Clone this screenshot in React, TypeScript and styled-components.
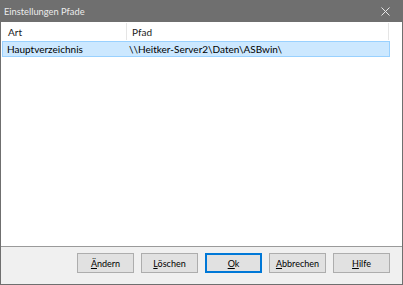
import React from 'react'
import styled, { createGlobalStyle } from 'styled-components'

const GlobalStyle = createGlobalStyle`
  html, body {
    margin: 0;
    padding: 0;
    background: #ffffff;
  }
  body {
    font-family: Lato, 'Noto Sans', sans-serif;
    font-size: 10px;
  }
`

const Window = styled.div`
  display: flex;
  flex-direction: column;
  width: 403px;
  height: 285px;
  box-sizing: border-box;
  border: 1px solid #6f6f6f;
  border-top: none;
  background: #ffffff;
`

const TitleBar = styled.div`
  display: flex;
  align-items: center;
  justify-content: space-between;
  height: 22px;
  padding: 0 13px 0 4px;
  margin: 0 -1px;
  background: #6f6f6f;
  color: #ececec;
  font-size: 9.3px;
`

const CloseIcon = styled.svg`
  width: 9px;
  height: 9px;
`

const ListView = styled.div`
  flex: 1;
  display: flex;
  flex-direction: column;
  padding: 0 12px 0 1px;
  border-bottom: 1px solid #9a9a9a;
`

const Row = styled.div<{ selected?: boolean }>`
  display: grid;
  grid-template-columns: 124px 1fr;
  box-sizing: border-box;
  height: ${({ selected }) => (selected ? '16px' : '19px')};
  align-items: center;
  background: ${({ selected }) => (selected ? '#cce8ff' : 'transparent')};
  border: 1px solid ${({ selected }) => (selected ? '#99d1ff' : 'transparent')};
  color: #000000;
`

const HeaderCell = styled.div<{ first?: boolean }>`
  height: 100%;
  display: flex;
  align-items: center;
  padding-left: ${({ first }) => (first ? '5px' : '5px')};
  color: #1a1a1a;
  border-right: 1px solid #e5e5e5;
`

const Cell = styled.div<{ first?: boolean }>`
  padding-left: ${({ first }) => (first ? '4px' : '2px')};
  white-space: nowrap;
`

const Footer = styled.div`
  display: flex;
  justify-content: flex-end;
  gap: 7px;
  height: 37px;
  padding: 6px 12px 0 0;
  box-sizing: border-box;
  background: #f0f0f0;
`

const Button = styled.button<{ primary?: boolean }>`
  width: 57px;
  height: 20px;
  padding: 0;
  box-sizing: border-box;
  font-family: inherit;
  font-size: 9px;
  color: #000000;
  background: #e1e1e1;
  border: 1px solid ${({ primary }) => (primary ? '#0078d7' : '#adadad')};
  box-shadow: ${({ primary }) => (primary ? 'inset 0 0 0 1px #0078d7' : 'none')};
`

const Key = styled.span`
  text-decoration: underline;
`

const buttons = [
  { key: 'Ä', rest: 'ndern' },
  { key: 'L', rest: 'öschen' },
  { key: 'O', rest: 'k', primary: true },
  { key: 'A', rest: 'bbrechen' },
  { key: 'H', rest: 'ilfe' }
]

export default function App() {
  return (
    <>
      <GlobalStyle />
      <Window>
        <TitleBar>
          <span>Einstellungen Pfade</span>
          <CloseIcon viewBox="0 0 9 9">
            <path d="M0.5 0.5 L8.5 8.5 M8.5 0.5 L0.5 8.5" stroke="#e6e6e6" strokeWidth="1" />
          </CloseIcon>
        </TitleBar>
        <ListView>
          <Row>
            <HeaderCell first>Art</HeaderCell>
            <HeaderCell>Pfad</HeaderCell>
          </Row>
          <Row selected>
            <Cell first>Hauptverzeichnis</Cell>
            <Cell>\\Heitker-Server2\Daten\ASBwin\</Cell>
          </Row>
        </ListView>
        <Footer>
          {buttons.map(b => (
            <Button key={b.key + b.rest} primary={b.primary}>
              <Key>{b.key}</Key>
              {b.rest}
            </Button>
          ))}
        </Footer>
      </Window>
    </>
  )
}
